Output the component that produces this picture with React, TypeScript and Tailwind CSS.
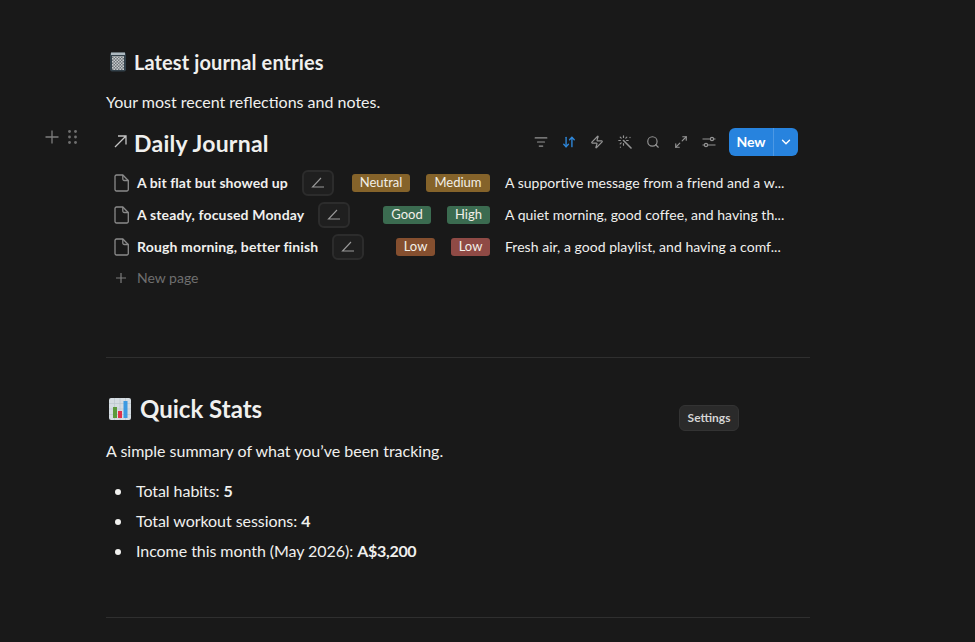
import { ArrowDownUp, ChevronDown, ListFilter, Maximize2, Search, Zap } from "lucide-react";

const entries = [
  {
    title: "A bit flat but showed up",
    track: "tracking-[0.07px]",
    tags: [
      { label: "Neutral", color: "bg-[#85632a]", w: "w-[58px]" },
      { label: "Medium", color: "bg-[#85632a]", w: "w-[64px]" },
    ],
    note: "A supportive message from a friend and a w...",
  },
  {
    title: "A steady, focused Monday",
    track: "tracking-[0.15px]",
    tags: [
      { label: "Good", color: "bg-[#3b6b50]", w: "w-[48px]" },
      { label: "High", color: "bg-[#3b6b50]", w: "w-[43px]" },
    ],
    note: "A quiet morning, good coffee, and having th...",
  },
  {
    title: "Rough morning, better finish",
    track: "tracking-[0.15px]",
    tags: [
      { label: "Low", color: "bg-[#854f2f]", w: "w-[39px]" },
      { label: "Low", color: "bg-[#8f4a45]", w: "w-[39px]" },
    ],
    note: "Fresh air, a good playlist, and having a comf...",
  },
];

const stats = [
  { label: "Total habits: ", value: "5" },
  { label: "Total workout sessions: ", value: "4" },
  { label: "Income this month (May 2026): ", value: "A$3,200" },
];

function PageIcon() {
  return (
    <svg width="16" height="18" viewBox="0 0 16 18" fill="none" stroke="#8a8a8a" strokeWidth="1.3" className="shrink-0">
      <path d="M2.5 1h6.3L14.3 6.5V15.5a1.5 1.5 0 0 1-1.5 1.5H2.5A1.5 1.5 0 0 1 1 15.5V2.5A1.5 1.5 0 0 1 2.5 1Z" />
      <path d="M8.8 1v4a1.5 1.5 0 0 0 1.5 1.5h4" />
    </svg>
  );
}

function AngleButton() {
  return (
    <div className="w-[32px] h-[26px] rounded-md border-2 border-[#2c2c2c] bg-[#1f1f1f] flex items-center justify-center shrink-0">
      <svg width="14" height="12" viewBox="0 0 14 12" fill="none" stroke="#9a9a9a" strokeWidth="1.1">
        <path d="M10 1 1.5 10H13" />
      </svg>
    </div>
  );
}

function AbacusEmoji() {
  return (
    <svg width="18" height="20" viewBox="0 0 18 20" className="shrink-0">
      <rect x="1" y="0.5" width="16" height="19" rx="2" fill="#33414a" />
      <rect x="2" y="0.5" width="14" height="2.5" fill="#aeb9c0" />
      <defs>
        <pattern id="beads" width="3" height="3" patternUnits="userSpaceOnUse">
          <rect width="3" height="3" fill="#6d7478" />
          <rect width="1.5" height="1.5" fill="#c8ccce" />
          <rect x="1.5" y="1.5" width="1.5" height="1.5" fill="#c8ccce" />
        </pattern>
      </defs>
      <rect x="3" y="4" width="12" height="14" fill="url(#beads)" />
    </svg>
  );
}

function ChartEmoji() {
  return (
    <svg width="22" height="22" viewBox="0 0 22 22" className="shrink-0 -mt-[1px]">
      <rect width="22" height="22" rx="2" fill="#d5dce2" />
      <path d="M0 5.5h22M0 11h22M0 16.5h22M5.5 0v22M11 0v22M16.5 0v22" stroke="#bcc6cd" strokeWidth="0.7" />
      <rect x="4" y="9" width="4" height="11" fill="#5c9a3c" />
      <rect x="9" y="13" width="4" height="7" fill="#e0314b" />
      <rect x="14.5" y="3" width="4" height="17" fill="#3d9ae2" />
    </svg>
  );
}

function SparkleWand() {
  return (
    <svg width="14" height="14" viewBox="0 0 14 14" fill="none" stroke="currentColor" strokeWidth="1.2" strokeLinecap="round">
      <path d="M5.5 5.5 13 13" strokeWidth="1.6" />
      <path d="M5.5 0.8v1.6M5.5 8.6v1.6M0.8 5.5h1.6M8.6 5.5h1.6M2.2 2.2l1 1M8.8 2.2l-1 1M2.2 8.8l1-1" />
      <path d="M12 2.4v.2M2.4 12v.2" />
    </svg>
  );
}

function SettingsSliders() {
  return (
    <svg width="14" height="14" viewBox="0 0 14 14" fill="none" stroke="currentColor" strokeWidth="1.2">
      <path d="M0.5 4h8M11.5 4h2M0.5 10h2M5.5 10h8" />
      <circle cx="10" cy="4" r="1.6" />
      <circle cx="4" cy="10" r="1.6" />
    </svg>
  );
}

export default function App() {
  return (
    <div className="relative h-screen overflow-hidden bg-[#191919] text-[#f0f0ee] font-['Lato','Liberation_Sans',sans-serif] pl-[106px]">
      <div className="w-[704px]">
        <div className="pt-[52px] h-[75px] flex items-start gap-[7px] pl-[3px]">
          <AbacusEmoji />
          <h2 className="text-[20px] leading-[20px] font-bold tracking-[0.1px]">Latest journal entries</h2>
        </div>
        <p className="text-[16px] leading-[24px] mt-[15px]">Your most recent reflections and notes.</p>

        <div className="relative mt-[9px] h-[40px] flex items-center">
          <div className="absolute -left-[62px] top-[6px] flex items-center gap-[7px]">
            <svg width="16" height="16" viewBox="0 0 16 16" stroke="#7d7d7d" strokeWidth="1.3">
              <path d="M8 1.5v13M1.5 8h13" />
            </svg>
            <svg width="12" height="16" viewBox="0 0 12 16" fill="#6f6f6f">
              <circle cx="2.5" cy="2.5" r="1.4" />
              <circle cx="8.5" cy="2.5" r="1.4" />
              <circle cx="2.5" cy="8" r="1.4" />
              <circle cx="8.5" cy="8" r="1.4" />
              <circle cx="2.5" cy="13.5" r="1.4" />
              <circle cx="8.5" cy="13.5" r="1.4" />
            </svg>
          </div>
          <svg width="13" height="13" viewBox="0 0 13 13" fill="none" stroke="#c4c4c4" strokeWidth="1.3" className="ml-[8px] -mt-[3px]">
            <path d="M1 12 12 1M4 1H12V9.5" />
          </svg>
          <h1 className="ml-[7px] text-[23px] leading-[28px] font-bold tracking-[0.25px]">Daily Journal</h1>
          <div className="ml-auto mr-[12px] -mt-[2px] flex items-center text-[#949494]">
            <div className="flex items-center gap-[14px]">
              <ListFilter size={14} />
              <ArrowDownUp size={14} strokeWidth={2.4} className="text-[#2e86d8]" />
              <Zap size={14} />
              <SparkleWand />
              <Search size={14} />
              <Maximize2 size={14} />
              <SettingsSliders />
            </div>
            <div className="ml-[13px] w-[69px] h-[28px] rounded-md bg-[#2783de] text-white flex items-center">
              <span className="w-[45px] text-center text-[14px] font-bold border-r border-[#4c98e4] h-full leading-[28px]">New</span>
              <ChevronDown size={14} strokeWidth={2.4} className="ml-[5px]" />
            </div>
          </div>
        </div>

        <div className="mt-[4px]">
          {entries.map((row) => (
            <div key={row.title} className="h-[32px] flex items-center pl-[8px] pr-[13px] whitespace-nowrap">
              <PageIcon />
              <span className={`${row.track} ml-[7px] pb-[2px] text-[14px] font-bold`}>{row.title}</span>
              <div className="ml-[14px]">
                <AngleButton />
              </div>
              <div className="ml-auto flex items-center gap-[16px]">
                {row.tags.map((tag, i) => (
                  <span
                    key={i}
                    className={`${tag.color} ${tag.w} h-[18px] rounded-[3px] text-[13px] leading-[17px] text-center text-[#f2efe8]`}
                  >
                    {tag.label}
                  </span>
                ))}
              </div>
              <span className="ml-[15px] pb-[2px] w-[292px] text-[14px] tracking-[0.03px] shrink-0">{row.note}</span>
            </div>
          ))}
          <div className="h-[30px] flex items-center pl-[9px] text-[#6f6f6f]">
            <svg width="12" height="12" viewBox="0 0 12 12" stroke="#7d7d7d" strokeWidth="1.2">
              <path d="M6 1v10M1 6h10" />
            </svg>
            <span className="ml-[10px] pb-[2px] text-[14px]">New page</span>
          </div>
        </div>

        <div className="mt-[64px] h-px bg-[#2f2f2f]" />

        <div className="mt-[39px] h-[24px] flex items-center gap-[9px] pl-[3px]">
          <ChartEmoji />
          <h2 className="text-[24px] leading-[28px] font-bold">Quick Stats</h2>
        </div>
        <p className="mt-[18px] text-[16px] leading-[24px]">A simple summary of what you’ve been tracking.</p>

        <ul className="mt-[14px] text-[16px]">
          {stats.map((s) => (
            <li key={s.label} className="h-[30px] flex items-center pl-[9px]">
              <span className="w-[6px] h-[6px] rounded-full bg-[#f0f0ee] mr-[15px] shrink-0" />
              <span className="pb-[2px] whitespace-pre tracking-[-0.06px]">
                {s.label}
                <b className="font-bold tracking-[-0.3px]">{s.value}</b>
              </span>
            </li>
          ))}
        </ul>

        <div className="mt-[50px] h-px bg-[#2f2f2f]" />
      </div>

      <div className="absolute left-[679px] top-[405px] w-[60px] h-[26px] rounded-md bg-[#2a2a2a] border border-[#333333] text-[12px] leading-[24px] font-bold text-center text-[#d4d4d4]">
        Settings
      </div>
    </div>
  );
}
